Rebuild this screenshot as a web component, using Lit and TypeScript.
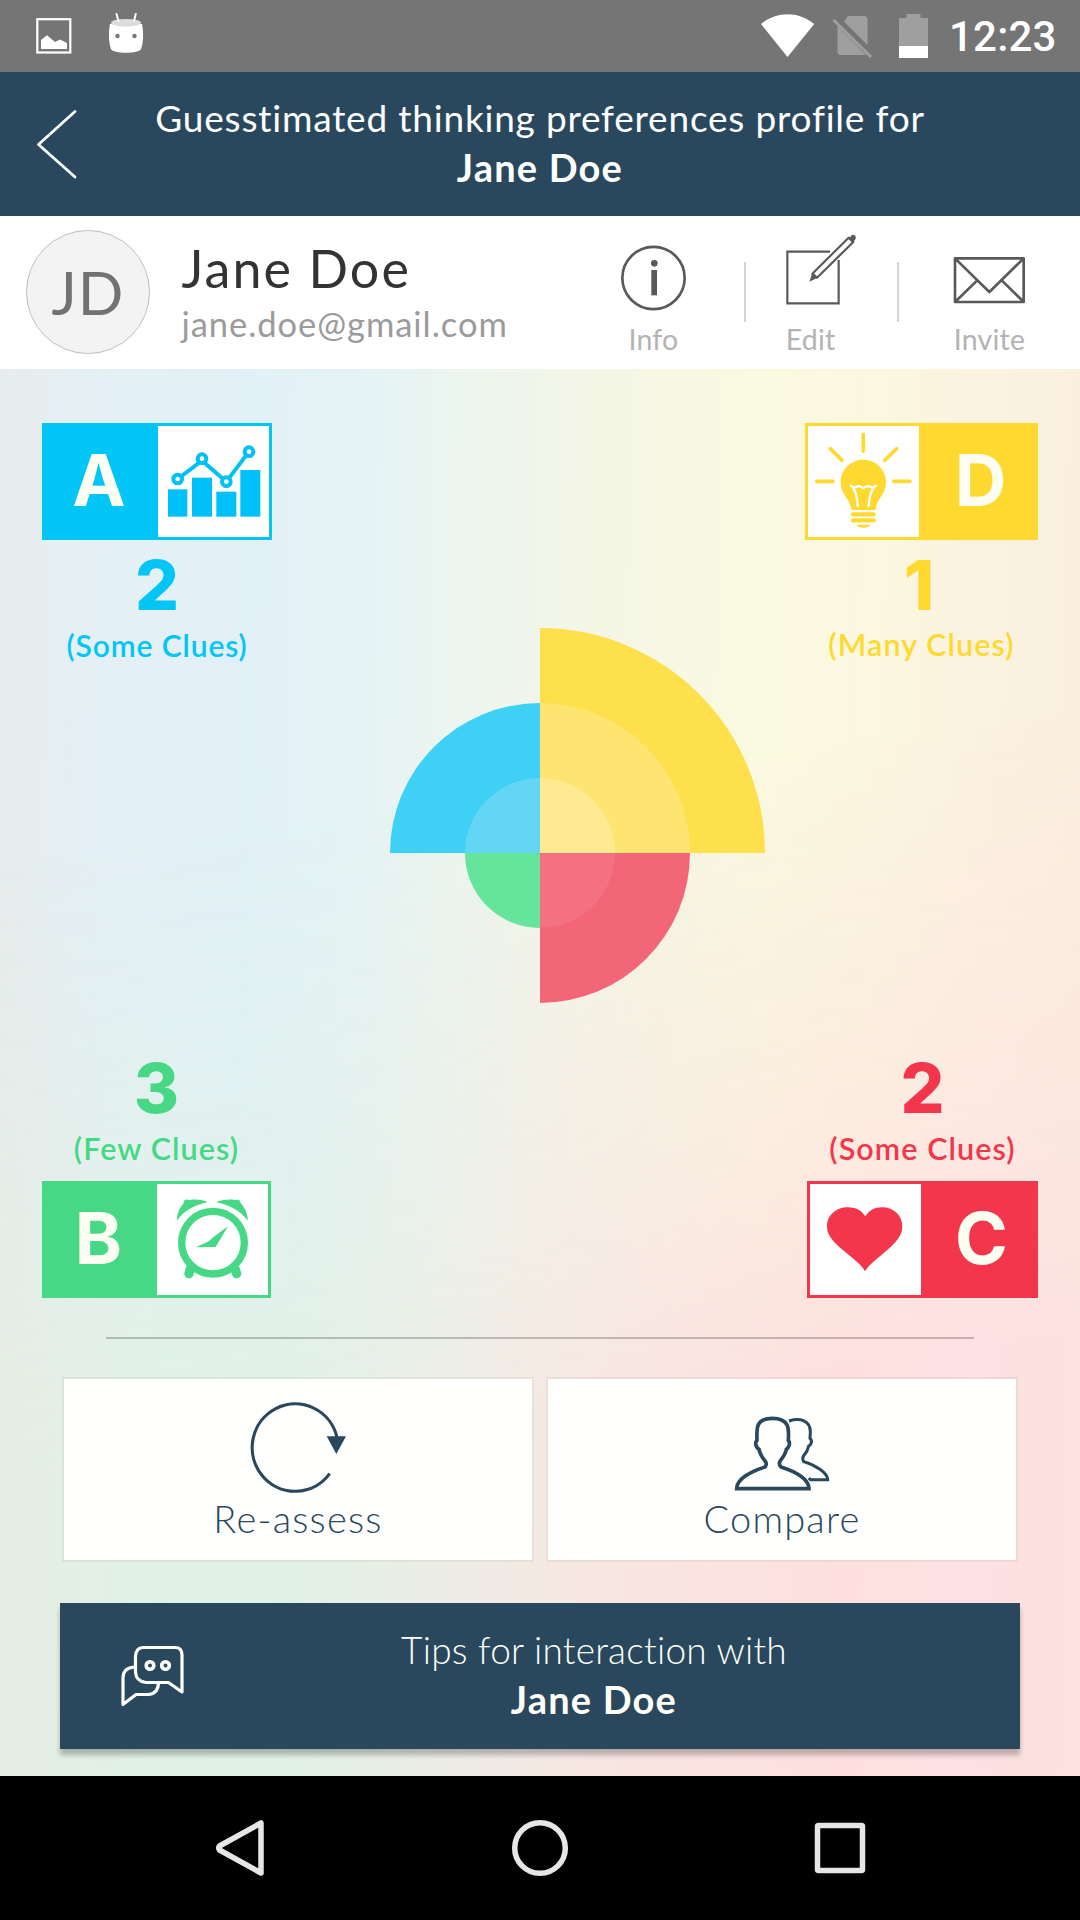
import { LitElement, html, css, svg, TemplateResult } from "lit";
import { customElement, property } from "lit/decorators.js";
import { classMap } from "lit/directives/class-map.js";

type Quadrant = {
  letter: string;
  score: string;
  clues: string;
  tone: string;
  right: boolean;
  bottom: boolean;
};

const QUADRANTS: Quadrant[] = [
  { letter: "A", score: "2", clues: "(Some Clues)", tone: "blue", right: false, bottom: false },
  { letter: "D", score: "1", clues: "(Many Clues)", tone: "yellow", right: true, bottom: false },
  { letter: "B", score: "3", clues: "(Few Clues)", tone: "green", right: false, bottom: true },
  { letter: "C", score: "2", clues: "(Some Clues)", tone: "red", right: true, bottom: true },
];

const ICONS: Record<string, TemplateResult> = {
  A: html`<svg width="111" height="111" viewBox="414 78 333 333" fill="none" stroke="#00c0fa">
    <g fill="#00c0fa" stroke="none">
      <rect x="444" y="268" width="58" height="82" /><rect x="516" y="233" width="60" height="117" />
      <rect x="589" y="275" width="60" height="75" /><rect x="661" y="210" width="60" height="140" />
    </g>
    <path d="M473 237L546 182L619 245L687 155" stroke-width="12" />
    <g stroke-width="12" fill="#fff">
      <circle cx="473" cy="237" r="13" /><circle cx="546" cy="176" r="13" />
      <circle cx="619" cy="245" r="13" /><circle cx="687" cy="155" r="13" />
    </g>
  </svg>`,
  D: html`<svg width="111" height="111" viewBox="84 78 333 333" fill="none" stroke-linecap="round">
    <g stroke="#ffd92f" stroke-width="11">
      <path d="M250 103V154M151 146L186 181M350 146L314 181M110 244H159M341 244H390" />
      <path d="M219 343H281M219 361H281" stroke-width="13" />
    </g>
    <path d="M250 179C212 179 182 209 182 247C182 285 208 292 215 330H286C292 292 318 285 318 247C318 209 288 179 250 179Z" fill="#ffd92f" />
    <path d="M228 374H272C265 386 236 386 228 374Z" fill="#ffd92f" />
    <path d="M212 257L223 263L236 258L250 264L264 258L277 263L288 257M219 263C229 278 232 297 233 318M281 263C271 278 267 297 266 318" stroke="#fff" stroke-width="7" />
  </svg>`,
  B: html`<svg width="111" height="111" viewBox="411 432 333 333" fill="#47d886">
    <circle cx="579" cy="608" r="94" fill="none" stroke="#47d886" stroke-width="22" />
    <path d="M471 542C470 522 480 500 490 492C489 482 497 475 509 480C528 477 550 479 563 487C525 494 492 512 471 542Z" />
    <path d="M683 542C684 522 673 500 662 490C662 482 657 477 646 480C626 477 605 479 588 487C626 494 661 512 683 542Z" />
    <path d="M624 559L587 621C565 620 547 622 528 622C542 614 556 609 568 602C583 588 603 575 624 559Z" />
    <path d="M511 686L507 701M645 686L650 701" stroke="#47d886" stroke-width="28" stroke-linecap="round" />
  </svg>`,
  C: html`<svg width="111" height="111" viewBox="90 432 333 333">
    <path d="M255 694C246 677 229 664 204 643C172 616 141 592 141 560C141 526 168 502 203 502C228 502 244 511 256 529C268 511 283 502 307 502C341 502 367 526 367 560C367 592 338 616 307 643C282 664 265 677 255 694Z" fill="#f3364b" />
  </svg>`,
};

@customElement("quadrant-badge")
export class QuadrantBadge extends LitElement {
  @property({ attribute: false }) data!: Quadrant;

  static styles = css`
    :host { display: block; }
    .quad { display: flex; flex-direction: column; font-family: "Lato", "Open Sans", sans-serif; text-align: center; --track: 1.1px; --size: 30.5px; }
    .quad.bottom { flex-direction: column-reverse; }
    .blue { --tone: #03c5f6; width: 230px; }
    .quad.blue { --track: 0.9px; --size: 30px; }
    .yellow { --tone: #ffd92f; width: 233px; }
    .green { --tone: #47d886; width: 229px; }
    .red { --tone: #f3364b; width: 231px; }
    .badge { display: flex; box-sizing: border-box; height: 117px; border: 3px solid var(--tone); background: var(--tone); }
    .right .badge { flex-direction: row-reverse; }
    .letter { flex: 1; box-sizing: border-box; padding: 0 5px 3px 0; display: flex; align-items: center; justify-content: center; font-family: "Inter", "Open Sans", sans-serif; font-size: 71.5px; line-height: 72px; font-weight: 700; color: #fdfff3; }
    .right .letter { padding: 0 0 3px 7px; }
    .icon { width: 111px; height: 111px; background: #fff; }
    .icon svg { display: block; }
    .score { margin-top: 10px; font-family: "Inter", "Open Sans", sans-serif; font-size: 69px; line-height: 70px; font-weight: 800; color: var(--tone); }
    .yellow .score { padding-right: 5px; }
    .clues { margin-top: 5px; font-size: var(--size); line-height: 40px; letter-spacing: var(--track); font-weight: 600; color: var(--tone); white-space: nowrap; }
    .yellow .clues { margin-top: 4px; }
    .bottom .score { margin-top: 0; margin-bottom: 5px; }
    .bottom .clues { margin-top: 0; margin-bottom: 13px; }
  `;

  render() {
    const q = this.data;
    const classes = { quad: true, [q.tone]: true, right: q.right, bottom: q.bottom };
    const badge = html`<div class="badge"><div class="letter">${q.letter}</div><div class="icon">${ICONS[q.letter]}</div></div>`;
    const score = html`<div class="score">${q.score}</div>`;
    const clues = html`<div class="clues">${q.clues}</div>`;
    return html`<div class=${classMap(classes)}>${q.bottom ? [badge, clues, score] : [badge, score, clues]}</div>`;
  }
}

const SECTORS = [
  { fill: "#3fd0f5", d: "M225 225H75A150 150 0 0 1 225 75Z" },
  { fill: "#62d6f4", d: "M225 225H150A75 75 0 0 1 225 150Z" },
  { fill: "#fedf4c", d: "M225 225V0A225 225 0 0 1 450 225Z" },
  { fill: "#fee571", d: "M225 225V75A150 150 0 0 1 375 225Z" },
  { fill: "#feea91", d: "M225 225V150A75 75 0 0 1 300 225Z" },
  { fill: "#65e59b", d: "M225 225V300A75 75 0 0 1 150 225Z" },
  { fill: "#f36678", d: "M225 225H375A150 150 0 0 1 225 375Z" },
  { fill: "#f37180", d: "M225 225H300A75 75 0 0 1 225 300Z" },
];

@customElement("app-root")
export class AppRoot extends LitElement {
  static styles = css`
    :host { display: block; width: 1080px; height: 1920px; font-family: "Lato", "Open Sans", sans-serif; overflow: hidden; }
    svg { display: block; }
    .screen { display: flex; flex-direction: column; width: 1080px; height: 1920px; }
    .status { display: flex; height: 72px; background: #757575; color: #fff; }
    .spacer { flex: 1; }
    .time { width: 135px; padding: 12px 0 0 4px; box-sizing: border-box; font: 500 42px/50px "Roboto", sans-serif; letter-spacing: 0.2px; }
    .header { display: grid; grid-template-columns: 110px 1fr 110px; height: 144px; background: #29485d; color: #fff; }
    .title { padding-top: 22px; text-align: center; font-size: 37px; line-height: 48px; white-space: nowrap; }
    .title .lead { letter-spacing: 0.8px; }
    .title b, .tips b { display: block; font-weight: 700; font-size: 38px; letter-spacing: 1.2px; }
    .title b { line-height: 50px; }
    .tips b { line-height: 50px; }
    .profile { display: flex; height: 153px; background: #fff; }
    .avatar { box-sizing: border-box; width: 124px; height: 124px; margin: 14px 0 0 26px; border: 1px solid #bfbfbf; border-radius: 50%; background: #f3f3f3; color: #727272; display: flex; align-items: center; justify-content: center; font-size: 60px; line-height: 60px; letter-spacing: 1px; }
    .who { flex: 1; margin-left: 31.5px; padding-top: 22px; }
    .name { font-size: 52px; line-height: 60px; letter-spacing: 2.1px; color: #333; }
    .mail { margin-top: 6px; font-size: 34.5px; line-height: 40px; letter-spacing: 0.95px; color: #9b9b9b; }
    .actions { display: flex; width: 517px; }
    .action { display: flex; flex-direction: column; align-items: center; font-size: 28.5px; line-height: 34px; letter-spacing: 0.2px; color: #b3b3b3; }
    .edit { margin-right: 22px; }
    .sep { width: 2px; height: 60px; margin-top: 46px; background: #d4d4d4; }
    .body {
      position: relative; isolation: isolate;
      display: flex; flex-direction: column; height: 1407px;
      background: linear-gradient(91deg, #e8ecec 0%, #e4f0f5 9%, #e2f1f7 23%, #e5f3f5 33%, #ecf5ef 42%, #f4f6e6 54%, #fafae0 70%, #fbf7e0 80%, #fbf2e0 90%, #faefdf 100%);
    }
    .body::before {
      content: ""; position: absolute; inset: 0; z-index: -1;
      background: linear-gradient(91deg, #e6ece1 0%, #e1f2e5 16%, #e1f1e6 28%, #ecede5 42%, #f5e8e3 52%, #f9e4e1 62%, #fde0de 77%, #fde0e2 90%, #fce1de 100%);
      mask-image: linear-gradient(172deg, transparent 480px, rgba(0, 0, 0, 0.5) 850px, #000 1110px);
    }
    .stage { display: grid; grid-template-columns: 1fr auto; grid-template-rows: 1fr auto; height: 968px; box-sizing: border-box; padding: 54px 42px 39px; }
    .chart { grid-area: 1 / 1 / 3 / 3; justify-self: center; align-self: start; margin-top: 205px; }
    .q0 { grid-area: 1 / 1; } .q1 { grid-area: 1 / 2; justify-self: end; }
    .q2 { grid-area: 2 / 1; } .q3 { grid-area: 2 / 2; justify-self: end; }
    .rule { height: 2px; margin: 0 106px; background: rgba(0, 0, 0, 0.22); }
    .cards { display: flex; gap: 12px; margin: 38px 62px 0; }
    .card { box-sizing: border-box; width: 472px; height: 185px; border: 2px solid rgba(70, 70, 60, 0.06); background: #fffffd; background-clip: padding-box; text-align: center; font-size: 38px; line-height: 45px; letter-spacing: 1.2px; font-weight: 300; color: #29485d; }
    .tips { display: flex; box-sizing: border-box; height: 146px; margin: 41px 60px 0; background: #29485d; color: #fffff8; box-shadow: 0 6px 5px rgba(0, 0, 0, 0.25); }
    .tip-text { flex: 1; padding: 22px 32px 0 0; text-align: center; font-size: 37px; line-height: 49px; font-weight: 300; letter-spacing: 0.25px; }
    .nav { display: flex; height: 144px; background: #000; }
  `;

  render() {
    return html`<div class="screen">
      <div class="status">
        <svg width="200" height="72" viewBox="0 0 200 72">
          <rect x="37.3" y="19.2" width="33" height="33.3" fill="none" stroke="#fff" stroke-width="2.2" />
          <path d="M41 49V40L47 35.3L55 42L60 39.5L67 43V49Z" fill="#fff" />
          <path d="M110 24C108 34 109 44 111 49C113 54 139 54 141 49C143 44 144 34 142 24Z" fill="#fff" />
          <ellipse cx="126" cy="22.8" rx="15" ry="3.9" fill="#dcdcdc" />
          <path d="M116.5 14L118.5 21M135.8 14L134 21" stroke="#fff" stroke-width="2" stroke-linecap="round" />
          <circle cx="117.5" cy="36" r="2.2" fill="#757575" /><circle cx="134.5" cy="36" r="2.2" fill="#757575" />
        </svg>
        <div class="spacer"></div>
        <svg width="205" height="72" viewBox="740 0 205 72">
          <path d="M761 24C777 11 798 11 814.2 24L787.5 57Z" fill="#fff" />
          <path d="M848 16H864Q867.5 16 867.5 19.5V45L844 21.5ZM837.5 26L866 55H841Q837.5 55 837.5 51.5Z" fill="#9f9f9f" />
          <path d="M833.5 20L871 57" stroke="#9f9f9f" stroke-width="3" />
          <path d="M899 18H906.5V14H920.5V18H928V46H899Z" fill="#9f9f9f" />
          <path d="M899 46H928V58H899Z" fill="#fff" />
        </svg>
        <div class="time">12:23</div>
      </div>
      <div class="header">
        <svg width="110" height="144" viewBox="0 72 110 144"><path d="M75 111.5L38.5 144.5L75 177" fill="none" stroke="#fff" stroke-width="2.8" stroke-linecap="round" stroke-linejoin="round" /></svg>
        <div class="title"><span class="lead">Guesstimated thinking preferences profile for</span><b>Jane Doe</b></div>
      </div>
      <div class="profile">
        <div class="avatar">JD</div>
        <div class="who"><div class="name">Jane Doe</div><div class="mail">jane.doe@gmail.com</div></div>
        <div class="actions">
          <div class="action">
            <svg width="181" height="106" viewBox="9 18 543 318">
              <circle cx="280.5" cy="204" r="93.5" fill="none" stroke="#595959" stroke-width="8" />
              <circle cx="283" cy="160" r="10" fill="#595959" /><rect x="274" y="180" width="17" height="76" fill="#595959" />
            </svg>Info
          </div>
          <div class="sep"></div>
          <div class="action edit">
            <svg width="129" height="106" viewBox="558 18 387 318" fill="none" stroke="#595959" stroke-width="6.5">
              <path d="M810 125H682V280H836V150" />
              <path d="M757 191L866 83L880 96L771 203Z" stroke-linejoin="round" />
              <path d="M748 215L757 190L773 203Z" fill="#595959" stroke="none" />
              <path d="M868 88L873 77Q880 71 886 78Q890 84 885 90L876 98Z" fill="#595959" stroke="none" />
            </svg>Edit
          </div>
          <div class="sep"></div>
          <div class="action">
            <svg width="181" height="106" viewBox="1017 18 543 318" fill="none" stroke="#595959" stroke-width="8" stroke-linejoin="round">
              <path d="M1185 145H1391V276H1185ZM1185 145L1288 246L1391 145M1185 276L1251 212M1391 276L1326 212" />
            </svg>Invite
          </div>
        </div>
      </div>
      <div class="body">
        <div class="stage">
          <svg class="chart" width="450" height="450" viewBox="0 0 450 450">
            ${SECTORS.map((s) => svg`<path d=${s.d} fill=${s.fill} />`)}
          </svg>
          ${QUADRANTS.map((q, i) => html`<quadrant-badge class="q${i}" .data=${q}></quadrant-badge>`)}
        </div>
        <div class="rule"></div>
        <div class="cards">
          <div class="card">
            <svg width="468" height="117" viewBox="72 177 1404 351">
              <path d="M891 352A129 131 0 1 0 869 461" fill="none" stroke="#29485d" stroke-width="9.5" />
              <path d="M860 349H918L889 402Z" fill="#29485d" />
            </svg>
            <span>Re-assess</span>
          </div>
          <div class="card">
            <svg width="468" height="117" viewBox="84 177 1404 351" fill="none" stroke="#29485d" stroke-width="11">
              <path d="M650 506H867C867 478 828 455 783 441C776 434 777 428 781 422C791 410 797 402 799 388C807 383 812 368 805 361C807 327 809 295 757 295C706 295 710 327 711 361C703 368 708 383 717 388C719 402 727 413 736 424C740 430 739 436 735 441C690 455 650 478 650 506Z" />
              <path d="M807 303C840 293 871 301 871 335C871 342 870 350 870 355C878 362 874 374 866 378C864 390 858 399 851 407C847 413 848 419 851 425C888 436 923 459 923 479H872L866 475" stroke-width="9" />
            </svg>
            <span>Compare</span>
          </div>
        </div>
        <div class="tips">
          <svg width="140" height="146" viewBox="60 1603 140 146" fill="none" stroke="#fff" stroke-width="3.2" stroke-linejoin="round">
            <path d="M143 1647.5H175Q182 1647.5 182 1655V1692L168.5 1682.5H146Q136 1681.5 135.5 1672V1656Q136 1648 143 1647.5Z" />
            <path d="M134 1667Q123 1668 123 1678V1704.5L136 1694.5H148Q158 1694 158.5 1683" />
            <circle cx="150" cy="1665.5" r="3.8" stroke-width="3.6" /><circle cx="165.5" cy="1665.5" r="3.8" stroke-width="3.6" />
          </svg>
          <div class="tip-text"><span>Tips for interaction with</span><b>Jane Doe</b></div>
        </div>
      </div>
      <div class="nav">
        <svg width="1080" height="144" viewBox="0 1776 1080 144" fill="none" stroke="#e6e6e6" stroke-width="5.5" stroke-linejoin="round">
          <path d="M261 1823V1873L219.5 1850Q218 1848 219.5 1846Z" />
          <circle cx="540" cy="1848" r="25.3" />
          <rect x="817.5" y="1825.5" width="45" height="45" rx="1" />
        </svg>
      </div>
    </div>`;
  }
}
